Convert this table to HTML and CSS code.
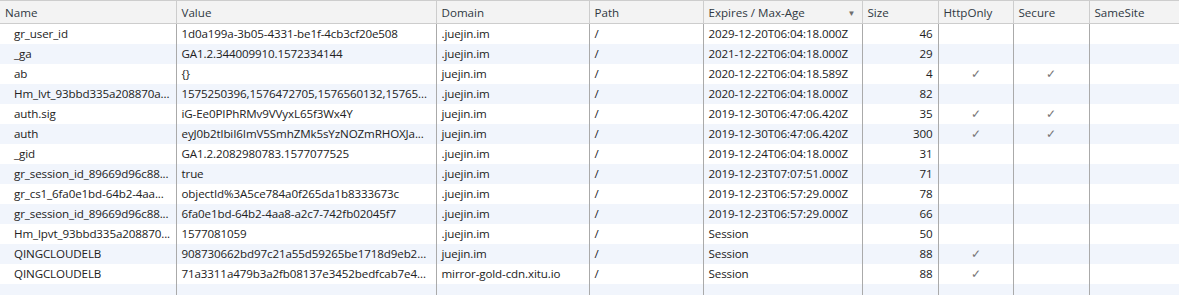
FILE: index.html
```html
<!DOCTYPE html>
<html lang="en">
<head>
  <meta charset="UTF-8" />
  <title>Cookies</title>
  <link rel="stylesheet" href="styles.css">
</head>
<body>
  <table class="grid">
    <colgroup>
      <col style="width:176px"><col style="width:260px"><col style="width:153px">
      <col style="width:114px"><col style="width:159px"><col style="width:76px">
      <col style="width:75px"><col style="width:76px"><col>
    </colgroup>
    <thead>
      <tr>
        <th>Name</th>
        <th>Value</th>
        <th>Domain</th>
        <th>Path</th>
        <th class="sorted">Expires / Max-Age<span class="arrow">&#9660;</span></th>
        <th>Size</th>
        <th>HttpOnly</th>
        <th>Secure</th>
        <th>SameSite</th>
      </tr>
    </thead>
    <tbody id="rows"></tbody>
  </table>

  <script>
    const cookies = [
      ['gr_user_id', '1d0a199a-3b05-4331-be1f-4cb3cf20e508', '.juejin.im', '2029-12-20T06:04:18.000Z', 46, 0, 0],
      ['_ga', 'GA1.2.344009910.1572334144', '.juejin.im', '2021-12-22T06:04:18.000Z', 29, 0, 0],
      ['ab', '{}', 'juejin.im', '2020-12-22T06:04:18.589Z', 4, 1, 1],
      ['Hm_lvt_93bbd335a208870a...', '1575250396,1576472705,1576560132,157656...', '.juejin.im', '2020-12-22T06:04:18.000Z', 82, 0, 0],
      ['auth.sig', 'iG-Ee0PIPhRMv9VVyxL65f3Wx4Y', 'juejin.im', '2019-12-30T06:47:06.420Z', 35, 1, 1],
      ['auth', 'eyJ0b2tlbiI6ImV5SmhZMk5sYzNOZmRHOXJa...', 'juejin.im', '2019-12-30T06:47:06.420Z', 300, 1, 1],
      ['_gid', 'GA1.2.2082980783.1577077525', '.juejin.im', '2019-12-24T06:04:18.000Z', 31, 0, 0],
      ['gr_session_id_89669d96c88...', 'true', '.juejin.im', '2019-12-23T07:07:51.000Z', 71, 0, 0],
      ['gr_cs1_6fa0e1bd-64b2-4aa...', 'objectId%3A5ce784a0f265da1b8333673c', '.juejin.im', '2019-12-23T06:57:29.000Z', 78, 0, 0],
      ['gr_session_id_89669d96c88...', '6fa0e1bd-64b2-4aa8-a2c7-742fb02045f7', '.juejin.im', '2019-12-23T06:57:29.000Z', 66, 0, 0],
      ['Hm_lpvt_93bbd335a208870...', '1577081059', '.juejin.im', 'Session', 50, 0, 0],
      ['QINGCLOUDELB', '908730662bd97c21a55d59265be1718d9eb2c...', 'juejin.im', 'Session', 88, 1, 0],
      ['QINGCLOUDELB', '71a3311a479b3a2fb08137e3452bedfcab7e48...', 'mirror-gold-cdn.xitu.io', 'Session', 88, 1, 0]
    ];

    const tbody = document.getElementById('rows');
    cookies.forEach(c => {
      const tr = document.createElement('tr');
      tr.innerHTML = `<td class="name">${c[0]}</td>
        <td>${c[1]}</td>
        <td>${c[2]}</td>
        <td>/</td>
        <td>${c[3]}</td>
        <td class="num">${c[4]}</td>
        <td class="check">${c[5] ? '&#10003;' : ''}</td>
        <td class="check">${c[6] ? '&#10003;' : ''}</td>
        <td></td>`;
      tbody.appendChild(tr);
    });
    const filler = document.createElement('tr');
    filler.className = 'filler';
    filler.innerHTML = '<td></td>'.repeat(9);
    tbody.appendChild(filler);
  </script>
</body>
</html>
```

FILE: styles.css
```css
* {
  box-sizing: border-box;
  margin: 0;
  padding: 0;
}
body {
  background: #fff;
  font-family: 'Open Sans', 'Noto Sans', sans-serif;
  font-size: 11.6px;
  color: #222;
  overflow: hidden;
}
.grid {
  width: 1179px;
  table-layout: fixed;
  border-collapse: collapse;
  border-top: 1px solid #cdcdcd;
}
.grid th {
  height: 23px;
  background: #f3f3f3;
  font-weight: normal;
  text-align: left;
  padding: 0 5px;
  color: #303942;
  border-bottom: 1px solid #cdcdcd;
  border-right: 1px solid #cdcdcd;
  white-space: nowrap;
  overflow: hidden;
}
.grid th.sorted {
  position: relative;
}
.arrow {
  position: absolute;
  right: 6px;
  top: 6px;
  font-size: 8px;
  color: #6e6e6e;
}
.grid td {
  height: 20px;
  padding: 0 5px;
  border-right: 1px solid #aaa;
  white-space: nowrap;
  overflow: hidden;
  text-overflow: ellipsis;
  letter-spacing: -0.12px;
}
.grid th:last-child,
.grid td:last-child {
  border-right: none;
}
.grid tbody tr:nth-child(even) {
  background: #f1f5fc;
}
.grid td.name {
  padding-left: 14px;
}
.grid td.num {
  text-align: right;
}
.grid td.check {
  text-align: center;
  color: #777;
  font-size: 12px;
}
.grid tr.filler td {
  height: 12px;
}
```
